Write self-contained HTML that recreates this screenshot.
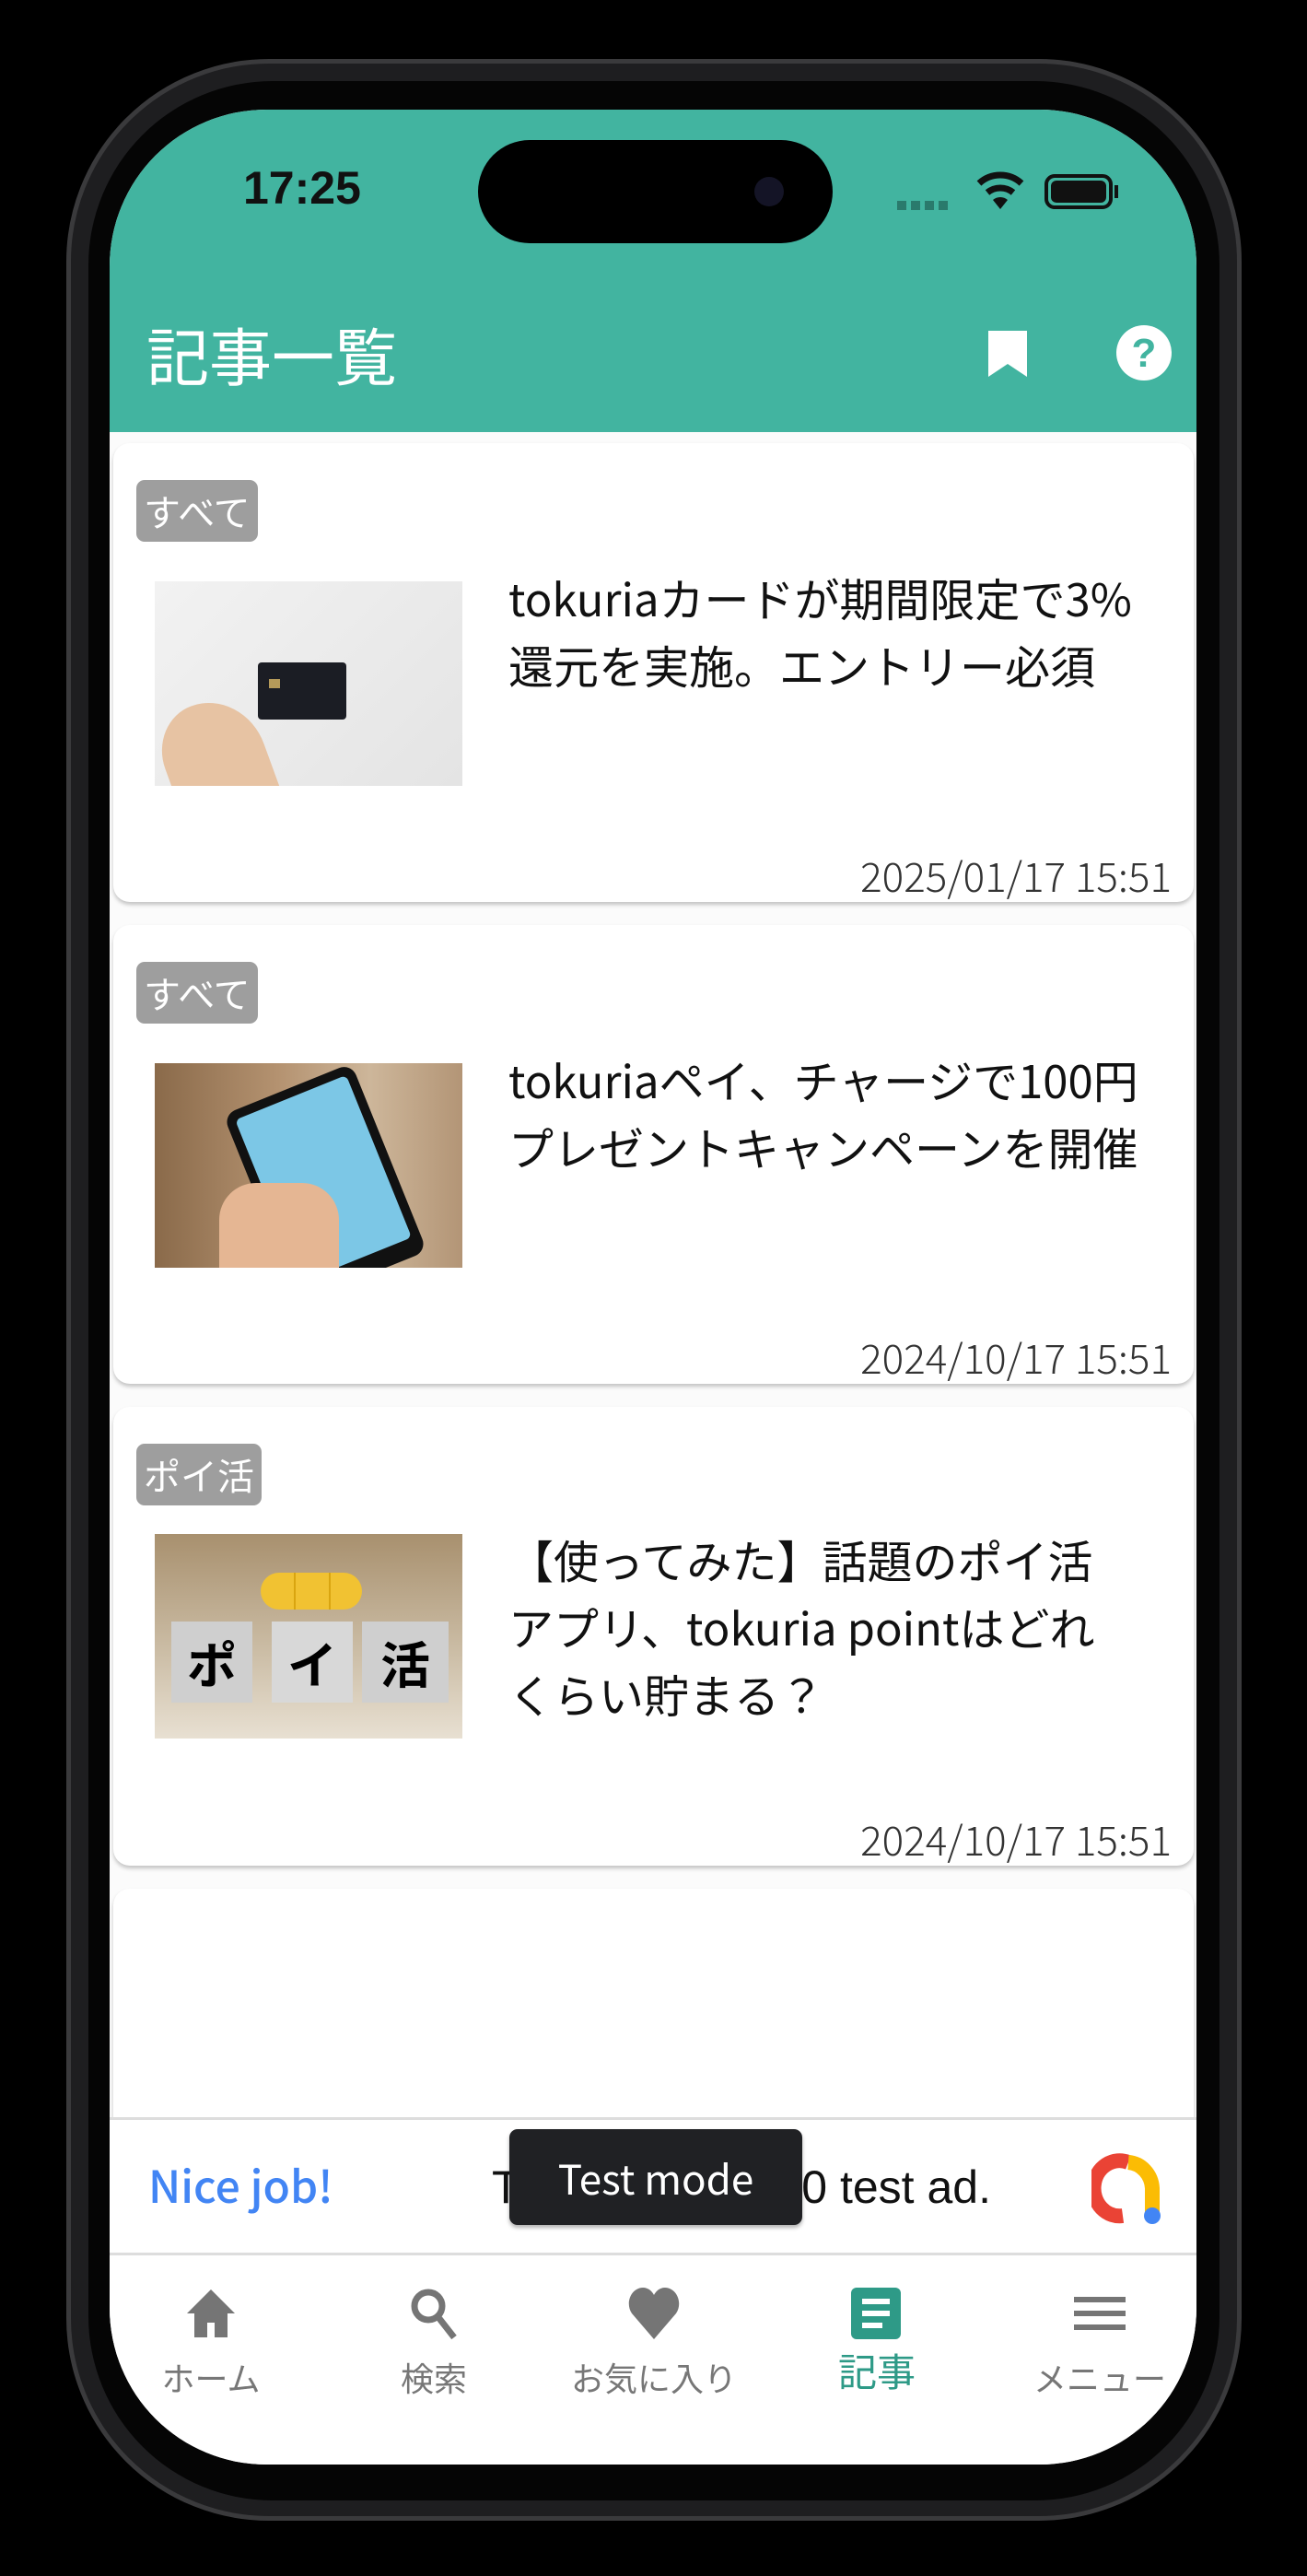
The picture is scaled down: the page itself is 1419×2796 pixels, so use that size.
<!DOCTYPE html>
<html><head><meta charset="utf-8"><style>
*{margin:0;padding:0;box-sizing:border-box}
html,body{width:1419px;height:2796px;background:#000;overflow:hidden;font-family:"Noto Sans CJK JP",sans-serif}
.frame{position:absolute;left:72px;top:64px;width:1276px;height:2672px;border-radius:220px;background:#1e1e20;border:5px solid #3a3a3c}
.frame2{position:absolute;left:96px;top:88px;width:1228px;height:2626px;border-radius:200px;background:#050505}
.screen{position:absolute;left:119px;top:119px;width:1180px;height:2556px;border-radius:170px;background:#fff;overflow:hidden}
.hdr{position:absolute;left:0;top:0;width:100%;height:350px;background:#42b4a0}
.island{position:absolute;left:400px;top:33px;width:385px;height:112px;border-radius:56px;background:#000}
.time{position:absolute;left:145px;top:56px;font-size:50px;font-weight:bold;color:#111;font-family:"Liberation Sans",sans-serif}
.title{position:absolute;left:40px;top:220px;font-size:68px;color:#fff;line-height:90px}
.list{position:absolute;left:0;top:350px;width:100%;height:1830px;background:#fbfbfb}
.card{position:absolute;left:4px;width:1173px;height:498px;background:#fff;border-radius:18px;box-shadow:0 3px 4px rgba(0,0,0,.22)}
.tag{position:absolute;left:25px;top:40px;height:67px;padding:0 8px;background:#9e9e9e;color:#fff;font-size:40px;line-height:67px;border-radius:9px}
.img{position:absolute;left:45px;top:150px;width:334px;height:222px;overflow:hidden}
.ttl{position:absolute;left:429px;top:131px;width:760px;font-size:49px;line-height:73px;color:#111}
.date{position:absolute;right:24px;top:438px;font-size:44px;line-height:60px;color:#333;font-weight:300}
.ad{position:absolute;left:0;top:2179px;width:100%;height:150px;border-top:3px solid #ddd;border-bottom:3px solid #ddd;background:#fff}
.nav{position:absolute;left:0;top:2332px;width:100%;height:224px;background:#fff}
.it{position:absolute;top:0;width:236px;text-align:center}
.it svg{position:absolute;left:88px;top:30px}
.it span{position:absolute;left:0;width:236px;top:99px;font-size:36px;line-height:60px;color:#777}
</style></head><body>
<div class="frame"></div><div class="frame2"></div>
<div class="screen">
 <div class="hdr">
  <div class="time">17:25</div>
  <div class="island"><div style="position:absolute;left:300px;top:40px;width:32px;height:32px;border-radius:50%;background:#141426"></div></div>
  <div style="position:absolute;left:855px;top:99px;width:60px;height:10px;background:repeating-linear-gradient(90deg,#2a7a6c 0 10px,transparent 10px 15px)"></div>
  <svg style="position:absolute;left:940px;top:66px" width="54" height="44" viewBox="0 0 54 44"><path d="M4 14 A34 34 0 0 1 50 14" stroke="#111" stroke-width="7" fill="none"/><path d="M13 24 A22 22 0 0 1 41 24" stroke="#111" stroke-width="7" fill="none"/><path d="M27 42 L19 32 A12 12 0 0 1 35 32Z" fill="#111"/></svg>
  <div style="position:absolute;left:1015px;top:70px;width:74px;height:38px;border:4px solid #111;border-radius:11px;padding:3px"><div style="width:100%;height:100%;background:#111;border-radius:6px"></div></div>
  <div style="position:absolute;left:1091px;top:82px;width:4px;height:14px;background:#111"></div>
  <div class="title">記事一覧</div>
  <svg style="position:absolute;left:952px;top:238px" width="46" height="54" viewBox="0 0 46 54"><path d="M2 2H44V52L23 38L2 52Z" fill="#fff"/></svg>
  <svg style="position:absolute;left:1093px;top:234px" width="60" height="60" viewBox="0 0 60 60"><circle cx="30" cy="30" r="30" fill="#fff"/><text x="30" y="45" text-anchor="middle" font-size="44" font-weight="bold" fill="#42b4a0" font-family="Liberation Sans">?</text></svg>
 </div>
 <div class="list">
  <div class="card" style="top:12px">
   <div class="tag">すべて</div>
   <div class="img" style="background:linear-gradient(135deg,#f2f2f2,#e4e4e4)">
    <div style="position:absolute;left:112px;top:88px;width:96px;height:62px;background:#1b1d24;border-radius:4px"></div>
    <div style="position:absolute;left:124px;top:106px;width:12px;height:10px;background:#b59a5a"></div>
    <div style="position:absolute;left:10px;top:130px;width:110px;height:120px;background:#e7c3a3;border-radius:50% 60% 0 0;transform:rotate(-20deg)"></div>
   </div>
   <div class="ttl">tokuriaカードが期間限定で3%<br>還元を実施。エントリー必須</div>
   <div class="date">2025/01/17 15:51</div>
  </div>
  <div class="card" style="top:535px">
   <div class="tag">すべて</div>
   <div class="img" style="background:linear-gradient(90deg,#8a6a4a,#b49270 40%,#cdb69a 70%,#b39576)">
    <div style="position:absolute;left:110px;top:20px;width:150px;height:220px;background:#111;border-radius:14px;transform:rotate(-22deg)"><div style="margin:10px;height:190px;background:#7cc7e6;border-radius:6px"></div></div>
    <div style="position:absolute;left:70px;top:130px;width:130px;height:110px;background:#e5b693;border-radius:40px 40px 0 0"></div>
   </div>
   <div class="ttl">tokuriaペイ、チャージで100円<br>プレゼントキャンペーンを開催</div>
   <div class="date">2024/10/17 15:51</div>
  </div>
  <div class="card" style="top:1058px">
   <div class="tag">ポイ活</div>
   <div class="img" style="top:138px;background:linear-gradient(180deg,#a8906e,#cdbfa8 60%,#e8e0d2)">
    <div style="position:absolute;left:115px;top:42px;width:110px;height:40px;background:repeating-linear-gradient(90deg,#f1c232 0 36px,#d9a510 36px 38px);border-radius:20px"></div>
    <div style="position:absolute;left:18px;top:95px;width:88px;height:88px;background:#cfcfcf;font:bold 54px 'Noto Sans CJK JP';text-align:center;line-height:88px">ポ</div>
    <div style="position:absolute;left:127px;top:95px;width:88px;height:88px;background:#d8d8d8;font:bold 54px 'Noto Sans CJK JP';text-align:center;line-height:88px">イ</div>
    <div style="position:absolute;left:225px;top:95px;width:94px;height:88px;background:#cfcfcf;font:bold 54px 'Noto Sans CJK JP';text-align:center;line-height:88px">活</div>
   </div>
   <div class="ttl" style="top:129px">【使ってみた】話題のポイ活<br>アプリ、tokuria pointはどれ<br>くらい貯まる？</div>
   <div class="date">2024/10/17 15:51</div>
  </div>
  <div class="card" style="top:1581px;height:300px"></div>
 </div>
 <div class="ad">
  <div style="position:absolute;left:42px;top:34px;font-size:48px;line-height:70px;color:#4285f4;font-weight:500">Nice job!</div>
  <div style="position:absolute;left:415px;top:38px;font-size:50px;line-height:70px;color:#111;font-family:'Liberation Sans',sans-serif">This is a 320x50 test ad.</div>
  <div style="position:absolute;left:434px;top:10px;width:318px;height:104px;background:#202124;border-radius:9px;color:#fff;font-size:44px;line-height:104px;text-align:center;box-shadow:0 3px 4px rgba(0,0,0,.3)">Test mode</div>
  <svg style="position:absolute;left:1066px;top:34px" width="80" height="82" viewBox="0 0 80 82"><path d="M34 70 A28 30 0 1 1 40 12" stroke="#ea4335" stroke-width="16" fill="none"/><path d="M40 12 A28 30 0 0 1 66 40 V66" stroke="#fbbc04" stroke-width="16" fill="none"/><circle cx="66" cy="70" r="9" fill="#4285f4"/></svg>
 </div>
 <div class="nav">
  <div class="it" style="left:-8px"><svg width="60" height="60" viewBox="0 0 60 60"><path d="M30 4L4 30H12V56H26V40H34V56H48V30H56Z" fill="#757575"/></svg><span>ホーム</span></div>
  <div class="it" style="left:234px"><svg width="60" height="60" viewBox="0 0 60 60"><circle cx="24" cy="22" r="15" stroke="#757575" stroke-width="7" fill="none"/><path d="M34 33L52 56" stroke="#757575" stroke-width="7"/></svg><span>検索</span></div>
  <div class="it" style="left:473px"><svg width="60" height="60" viewBox="0 0 60 60"><path d="M30 58L6 30C-2 18 6 2 18 2C24 2 28 6 30 10C32 6 36 2 42 2C54 2 62 18 54 30Z" fill="#757575"/></svg><span>お気に入り</span></div>
  <div class="it" style="left:715px"><svg width="60" height="60" viewBox="0 0 60 60"><rect x="2" y="2" width="54" height="56" rx="6" fill="#2e9a87"/><rect x="14" y="14" width="30" height="6" fill="#fff"/><rect x="14" y="27" width="30" height="6" fill="#fff"/><rect x="14" y="40" width="22" height="6" fill="#fff"/></svg><span style="color:#2e9a87;font-size:42px;top:92px">記事</span></div>
  <div class="it" style="left:957px"><svg width="60" height="60" viewBox="0 0 60 60"><rect x="2" y="12" width="56" height="6" fill="#757575"/><rect x="2" y="27" width="56" height="6" fill="#757575"/><rect x="2" y="42" width="56" height="6" fill="#757575"/></svg><span>メニュー</span></div>
 </div>
</div>
</body></html>
